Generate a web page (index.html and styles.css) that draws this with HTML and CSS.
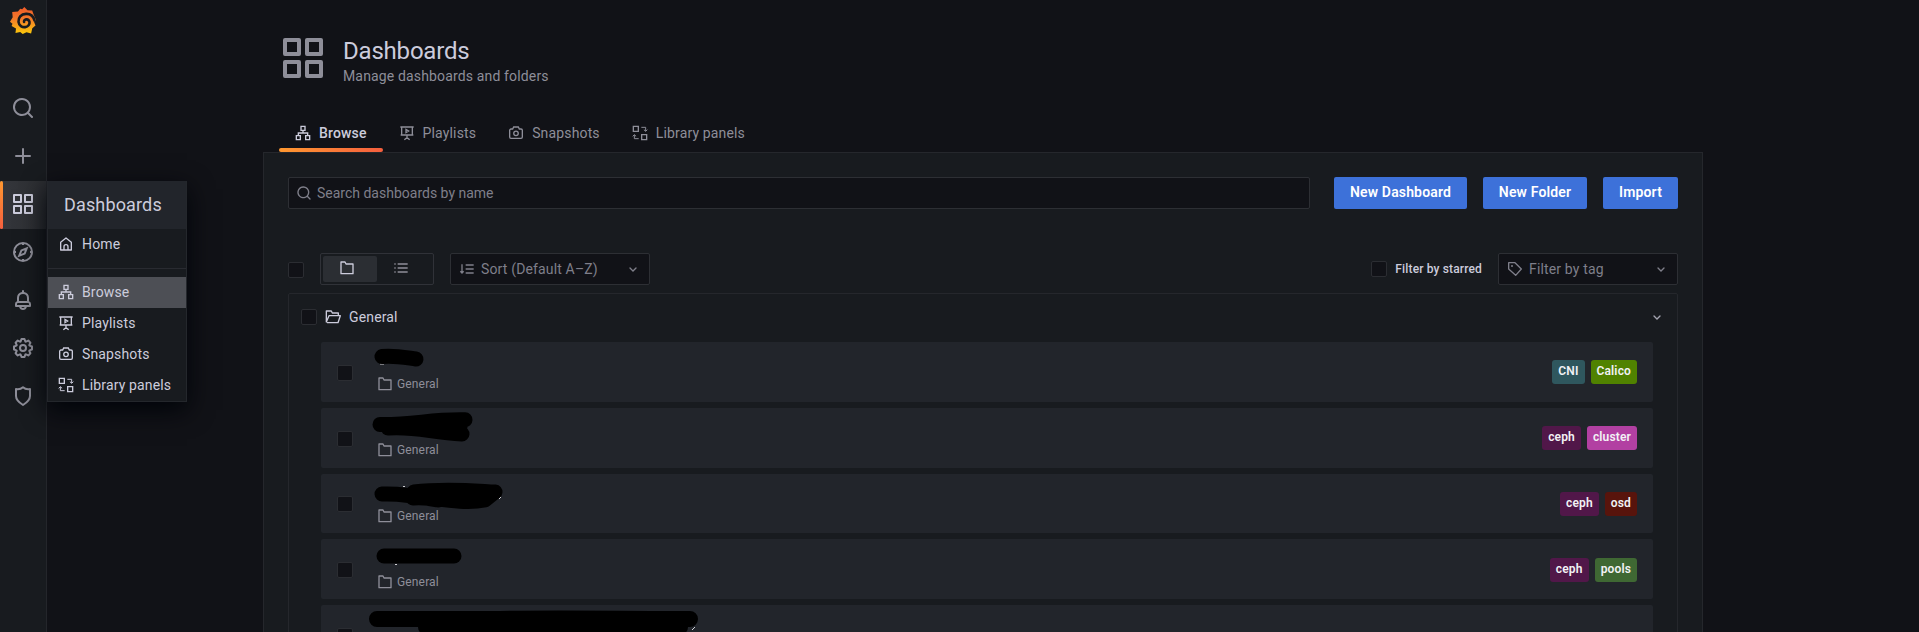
FILE: index.html
```html
<!DOCTYPE html>
<html lang="en">
<head>
<meta charset="utf-8">
<title>Dashboards</title>
<link rel="stylesheet" href="styles.css">
</head>
<body>
<svg class="defs" width="0" height="0">
  <defs>
    <linearGradient id="flame" x1="0" y1="0" x2="0" y2="1"><stop offset="0" stop-color="#f05a28"/><stop offset=".45" stop-color="#f47b2a"/><stop offset="1" stop-color="#fbca0a"/></linearGradient>
  </defs>
  <symbol id="search" viewBox="0 0 24 24"><path d="M21.71,20.29,18,16.61A9,9,0,1,0,16.61,18l3.68,3.68a1,1,0,0,0,1.42,0A1,1,0,0,0,21.71,20.29ZM11,18a7,7,0,1,1,7-7A7,7,0,0,1,11,18Z"/></symbol>
  <symbol id="plus" viewBox="0 0 24 24"><path d="M19,11H13V5a1,1,0,0,0-2,0v6H5a1,1,0,0,0,0,2h6v6a1,1,0,0,0,2,0V13h6a1,1,0,0,0,0-2Z"/></symbol>
  <symbol id="apps" viewBox="0 0 24 24"><g class="line" stroke-linejoin="round"><rect x="3" y="3" width="7" height="7"/><rect x="14" y="3" width="7" height="7"/><rect x="3" y="14" width="7" height="7"/><rect x="14" y="14" width="7" height="7"/></g></symbol>
  <symbol id="compass" viewBox="0 0 24 24"><g class="line"><circle cx="12" cy="12" r="9"/><path d="M12 3v2M12 19v2M3 12h2M19 12h2M15.8 8.2l-2.1 5.4-5.5 2.2 2.2-5.4z"/></g></symbol>
  <symbol id="bell" viewBox="0 0 24 24"><path d="M18,13.18V10a6,6,0,0,0-5-5.91V3a1,1,0,0,0-2,0V4.09A6,6,0,0,0,6,10v3.18A3,3,0,0,0,4,16v2a1,1,0,0,0,1,1H8.14a4,4,0,0,0,7.72,0H19a1,1,0,0,0,1-1V16A3,3,0,0,0,18,13.18ZM8,10a4,4,0,0,1,8,0v3H8Zm4,10a2,2,0,0,1-1.72-1h3.44A2,2,0,0,1,12,20Zm6-3H6V16a1,1,0,0,1,1-1H17a1,1,0,0,1,1,1Z"/></symbol>
  <symbol id="cog" viewBox="0 0 24 24"><path d="M21.32,9.55l-1.89-.63.89-1.78A1,1,0,0,0,20.13,6L18,3.87a1,1,0,0,0-1.15-.19l-1.78.89-.63-1.89A1,1,0,0,0,13.5,2h-3a1,1,0,0,0-.95.68L8.92,4.57,7.14,3.68A1,1,0,0,0,6,3.87L3.87,6a1,1,0,0,0-.19,1.15l.89,1.78-1.89.63A1,1,0,0,0,2,10.5v3a1,1,0,0,0,.68.95l1.89.63-.89,1.78A1,1,0,0,0,3.87,18L6,20.13a1,1,0,0,0,1.15.19l1.78-.89.63,1.89a1,1,0,0,0,.95.68h3a1,1,0,0,0,.95-.68l.63-1.89,1.78.89A1,1,0,0,0,18,20.13L20.13,18a1,1,0,0,0,.19-1.15l-.89-1.78,1.89-.63A1,1,0,0,0,22,13.5v-3A1,1,0,0,0,21.32,9.55ZM20,12.78l-1.2.4A2,2,0,0,0,17.64,16l.57,1.14-1.1,1.1L16,17.64a2,2,0,0,0-2.79,1.16l-.4,1.2H11.22l-.4-1.2A2,2,0,0,0,8,17.64l-1.14.57-1.1-1.1L6.36,16A2,2,0,0,0,5.2,13.18L4,12.78V11.22l1.2-.4A2,2,0,0,0,6.36,8L5.79,6.89l1.1-1.1L8,6.36A2,2,0,0,0,10.82,5.2l.4-1.2h1.56l.4,1.2A2,2,0,0,0,16,6.36l1.14-.57,1.1,1.1L17.64,8a2,2,0,0,0,1.16,2.79l1.2.4ZM12,8a4,4,0,1,0,4,4A4,4,0,0,0,12,8Zm0,6a2,2,0,1,1,2-2A2,2,0,0,1,12,14Z"/></symbol>
  <symbol id="shield" viewBox="0 0 24 24"><path class="line" stroke-linejoin="round" d="M12 3.200C10 5 7.500 5.500 5 5v7c0 4 3 6.500 7 9 4-2.500 7-5 7-9V5c-2.500.5-5 0-7-1.800z"/></symbol>
  <symbol id="home" viewBox="0 0 24 24"><path class="line" stroke-linejoin="round" d="M4 9.500 12 3l8 6.500V21H4zM9 21v-5a3 3 0 0 1 6 0v5"/></symbol>
  <symbol id="sitemap" viewBox="0 0 24 24"><path class="line" d="M9 2h6v6H9zM2 16h6v6H2zM16 16h6v6h-6zM12 8v4M5 16v-4h14v4"/></symbol>
  <symbol id="playlist" viewBox="0 0 24 24"><path class="line" d="M2 3h20M4 3v12h16V3M12 15v6M2.500 15h19M8 22l4-3 4 3M10.500 6.500v5l4-2.500z"/></symbol>
  <symbol id="camera" viewBox="0 0 24 24"><g class="line"><path d="M2.500 8a2 2 0 0 1 2-2H7l1.500-3h7L17 6h2.500a2 2 0 0 1 2 2v10a2 2 0 0 1-2 2h-15a2 2 0 0 1-2-2z"/><circle cx="12" cy="12.500" r="3.400"/></g></symbol>
  <symbol id="library" viewBox="0 0 24 24"><path class="line" d="M2 2h7.500v7.500H2zM14.500 14.500H22V22h-7.500z"/><path class="thin" d="M14 3.500h6.500V9M17.800 7l2.700 2.500L23 7M10 20.500H3.500V15M1 17l2.500-2.500L6.200 17"/></symbol>
  <symbol id="folder" viewBox="0 0 24 24"><path class="line" d="M3 3h6l1.500 3H21v14.500H3z" stroke-linejoin="round"/></symbol>
  <symbol id="folder-open" viewBox="0 0 24 24"><path class="line" d="M20 10V6h-9L9.500 3H2v16.500L6 10h17l-3.500 10.500H3" stroke-linejoin="round"/></symbol>
  <symbol id="list" viewBox="0 0 24 24"><path class="line" d="M7 6h15M7 12h15M7 18h15M2 6h2M2 12h2M2 18h2"/></symbol>
  <symbol id="sort" viewBox="0 0 24 24"><path class="line" d="M10 6h12M10 12h12M10 18h12M4.500 5v13M2 15.500 4.500 18 7 15.500"/></symbol>
  <symbol id="tag" viewBox="0 0 24 24"><path class="line" d="M2.500 2.500H12l9.500 9.500-8.500 9.500L2.500 12z" stroke-linejoin="round"/><circle cx="7.500" cy="7.500" r="1.500"/></symbol>
  <symbol id="angle" viewBox="0 0 24 24"><path class="line" d="M7.500 10.500l4.500 4.500 4.500-4.500" stroke-linecap="round"/></symbol>
</svg>

<div class="app">
  <nav class="sidebar">
    <a class="logo"><svg width="26" height="27" viewBox="0 0 26 27"><path fill="url(#flame)" d="M14.300 0l3.200 3.300 4.700.1 1.300 3.800 2.500 6-2 1.600 1.500 3.700-3.200 2.800-1.200 5.200-4.600-1.300-3.800 1.700-2.500-2-4.700 1.100L6 21.500 1.600 19 2.500 16.800 0 14.700l2.700-4.500L2.200 4.900l5.800-.5L10.200 1.800l2 .4z"/><path class="swirl" d="M24.500 13.500C23.300 8.500 19.500 6.700 16 6.900c-5 .2-8 4-7.500 8 .5 3.800 3.700 5.600 6.700 5.200 3-.4 4.700-2.800 4.300-5-.4-2-2-3-3.700-2.700-1.400.3-2 1.400-1.700 2.500"/></svg></a>
    <a class="nav-item"><svg class="i24"><use href="#search"/></svg></a>
    <a class="nav-item"><svg class="i24"><use href="#plus"/></svg></a>
    <a class="nav-item active"><svg class="i24"><use href="#apps"/></svg>
      <div class="flyout">
        <div class="flyout-title">Dashboards</div>
        <div class="flyout-item"><svg class="i16"><use href="#home"/></svg>Home</div>
        <div class="divider"></div>
        <div class="flyout-item current"><svg class="i16"><use href="#sitemap"/></svg>Browse</div>
        <div class="flyout-item"><svg class="i16"><use href="#playlist"/></svg>Playlists</div>
        <div class="flyout-item"><svg class="i16"><use href="#camera"/></svg>Snapshots</div>
        <div class="flyout-item"><svg class="i16"><use href="#library"/></svg>Library panels</div>
      </div>
    </a>
    <a class="nav-item"><svg class="i24"><use href="#compass"/></svg></a>
    <a class="nav-item"><svg class="i24"><use href="#bell"/></svg></a>
    <a class="nav-item"><svg class="i24"><use href="#cog"/></svg></a>
    <a class="nav-item"><svg class="i24"><use href="#shield"/></svg></a>
  </nav>

  <main class="page">
    <header class="page-header">
      <svg class="i48"><use href="#apps"/></svg>
      <div>
        <h1>Dashboards</h1>
        <p>Manage dashboards and folders</p>
      </div>
    </header>
    <div class="tabs">
      <a class="tab selected"><svg class="i16"><use href="#sitemap"/></svg>Browse</a>
      <a class="tab"><svg class="i16"><use href="#playlist"/></svg>Playlists</a>
      <a class="tab"><svg class="i16"><use href="#camera"/></svg>Snapshots</a>
      <a class="tab"><svg class="i16"><use href="#library"/></svg>Library panels</a>
    </div>
    <section class="panel">
      <div class="actions">
        <div class="search"><svg class="i16"><use href="#search"/></svg>Search dashboards by name</div>
        <button class="w-dash">New Dashboard</button>
        <button class="w-folder">New Folder</button>
        <button class="w-import">Import</button>
      </div>
      <div class="filters">
        <span class="check"></span>
        <div class="layout-toggle"><span class="on"><svg class="i16"><use href="#folder"/></svg></span><span><svg class="i16"><use href="#list"/></svg></span></div>
        <div class="select sort"><svg class="i16"><use href="#sort"/></svg><span>Sort (Default A–Z)</span><svg class="i16"><use href="#angle"/></svg></div>
        <label class="starred"><span class="check"></span>Filter by starred</label>
        <div class="select tags"><svg class="i16"><use href="#tag"/></svg><span>Filter by tag</span><svg class="i16"><use href="#angle"/></svg></div>
      </div>
      <div class="folder">
        <div class="folder-head"><span class="check"></span><svg class="i16"><use href="#folder-open"/></svg><span class="name">General</span><svg class="i16 caret"><use href="#angle"/></svg></div>
        <div class="rows">
          <div class="row"><span class="check"></span>
            <div class="info"><svg class="scribble" viewBox="0 0 340 32"><path class="speck" d="M10 22h4"/><path stroke-width="15" d="M12 14.500C24 13 38 16 46 17"/></svg><div class="loc"><svg class="i16"><use href="#folder"/></svg>General</div></div>
            <span class="label cni">CNI</span><span class="label calico">Calico</span></div>
          <div class="row"><span class="check"></span>
            <div class="info"><svg class="scribble" viewBox="0 0 340 32"><path stroke-width="15" d="M10 16.500C45 17 60 11 95 11.800M18 20C45 18 60 24 92 26M35 19L90 14M60 19h30"/></svg><div class="loc"><svg class="i16"><use href="#folder"/></svg>General</div></div>
            <span class="label ceph">ceph</span><span class="label cluster">cluster</span></div>
          <div class="row"><span class="check"></span>
            <div class="info"><svg class="scribble" viewBox="0 0 340 32"><path stroke-width="15" d="M12 20c20-1 40 3 56 6M44 18C75 14 105 17 125 18M43 24C65 22 90 31 115 26L125 18M60 22h60"/><path class="speck" d="M33 12.500h2M129 25l2-2"/></svg><div class="loc"><svg class="i16"><use href="#folder"/></svg>General</div></div>
            <span class="label ceph">ceph</span><span class="label osd">osd</span></div>
          <div class="row"><span class="check"></span>
            <div class="info"><svg class="scribble" viewBox="0 0 340 32"><path stroke-width="15" d="M14 16H84"/><path class="speck" d="M25 24.500h2"/></svg><div class="loc"><svg class="i16"><use href="#folder"/></svg>General</div></div>
            <span class="label ceph">ceph</span><span class="label pools">pools</span></div>
          <div class="row"><span class="check"></span>
            <div class="info"><svg class="scribble" viewBox="0 0 340 32"><path stroke-width="16" d="M7 14H130C180 13 250 14 320 14M56 22H310"/><path class="speck" d="M322 25l3-3"/></svg></div></div>
        </div>
      </div>
    </section>
  </main>
</div>
</body>
</html>
```
FILE: styles.css
```css
* { box-sizing: border-box; }
body { margin: 0; background: #111217; color: #ccccdc; font: 14px/22px Roboto, sans-serif; letter-spacing: 0.15px; }
.defs { position: absolute; }
svg { display: block; flex: none; fill: currentColor; overflow: visible; }
.line { fill: none; stroke: currentColor; stroke-width: 2; }
.thin { fill: none; stroke: currentColor; stroke-width: 1.5; }
.i16 { width: 16px; height: 16px; }
.i24 { width: 24px; height: 24px; }
.i48 { width: 48px; height: 48px; }
.app { display: flex; height: 632px; overflow: hidden; }

.sidebar { width: 47px; flex: none; background: #181b1f; border-right: 1px solid #24262b; color: #8e8e99; }
.logo { display: block; height: 85px; padding: 7px 0 0 10px; }
.swirl { fill: none; stroke: #181b1f; stroke-width: 2.6; stroke-linecap: round; }
.nav-item { position: relative; display: flex; height: 48px; padding: 11px 0 0 11px; }
.nav-item.active { color: #ccccdc; background: linear-gradient(90deg, #35373c, #2b2d31); }
.nav-item.active::before { content: ""; position: absolute; left: 0; top: 0; width: 3px; height: 48px; border-radius: 2px; background: linear-gradient(#ff9830, #f55f3e); }
.flyout { position: absolute; z-index: 2; left: 47px; top: 0; width: 140px; height: 221px; background: #181b1f; border: 1px solid #24272c; border-top: 0; box-shadow: 0 8px 24px #010409; }
.flyout-title { height: 48px; padding-left: 16px; background: #22252b; font-size: 18px; line-height: 47px; letter-spacing: 0.15px; }
.flyout-item { display: flex; align-items: center; gap: 8px; height: 31px; padding: 0 10px 2px; white-space: nowrap; }
.flyout-item.current { background: #4d4f55; }
.divider { height: 1px; margin: 8px 0; background: #292b31; }

.page { width: 1440px; margin-left: 216px; display: flex; flex-direction: column; }
.page-header { display: flex; height: 112px; padding: 34px 16px 0; gap: 16px; color: #8e8e99; }
.page-header h1 { margin: 2px 0 0; font-size: 24px; line-height: 30px; font-weight: 400; letter-spacing: -0.2px; color: #ccccdc; }
.page-header p { margin: 0; line-height: 20px; }
.tabs { display: flex; height: 40px; padding-left: 16px; color: #8e8e99; }
.tab { position: relative; display: flex; align-items: center; gap: 8px; height: 40px; padding: 2px 16px 0; }
.tab.selected { color: #ccccdc; font-weight: 500; }
.tab.selected::after { content: ""; position: absolute; left: 0; right: 0; bottom: 0; height: 4px; border-radius: 2px; background: linear-gradient(90deg, #ff9830, #f55f3e); }
.panel { height: 480px; padding: 24px; background: #181b1f; border: 1px solid #25272c; border-bottom: 0; }
.actions { display: flex; height: 32px; }
.search { display: flex; flex: 1; align-items: center; gap: 5px; margin-right: 24px; padding-left: 7px; background: #111217; border: 1px solid #2d2f34; border-radius: 2px; color: #7f7f8a; letter-spacing: 0; }
button { height: 32px; margin: 0 0 0 16px; padding: 0 0 2px; border: 0; border-radius: 2px; background: #3d71d9; color: #fff; font: 600 14px/30px Roboto, sans-serif; letter-spacing: 0.15px; }
.w-dash { width: 133px; margin-left: 0; }
.w-folder { width: 104px; }
.w-import { width: 75px; }
.filters { display: flex; height: 32px; margin: 44px 0 8px; align-items: center; }
.check { width: 16px; height: 16px; flex: none; background: #111217; border: 1px solid #2b2d32; border-radius: 2px; }
.filters > .check { margin-top: 2px; }
.layout-toggle { display: flex; width: 114px; height: 32px; margin: 0 16px; padding: 2px; border: 1px solid #303238; border-radius: 2px; color: #8e8e99; }
.layout-toggle span { width: 54px; padding: 4px 0 0 16px; border-radius: 2px; }
.layout-toggle .on { background: #2b2e33; color: #ccccdc; }
.select { display: flex; align-items: center; gap: 6px; height: 32px; padding: 0 8px; background: #111217; border: 1px solid #2d2f34; border-radius: 2px; color: #7f7f8a; }
.select span { flex: 1; }
.sort { width: 200px; }
.tags { width: 180px; }
.starred { display: flex; align-items: center; gap: 8px; margin: 0 16px 0 auto; font-size: 12px; font-weight: 500; }
.starred .check { margin-bottom: 1px; }
.folder { height: 400px; border: 1px solid #25272c; border-radius: 2px; }
.folder-head { display: flex; align-items: center; height: 48px; padding: 0 0 2px 12px; }
.folder-head svg { margin-left: 8px; }
.name { margin-left: 8px; }
.folder-head .caret { margin: 0 12px 0 auto; color: #a4a4b0; }
.rows { display: flex; flex-direction: column; gap: 6px; padding: 0 24px 0 32px; }
.row { display: flex; align-items: center; height: 59.75px; flex: none; padding: 0 16px; background: #22252b; border-radius: 2px; }
.row .check { margin-top: 2px; }
.info { flex: 1; height: 59px; padding: 0 0 0 16px; }
.scribble { width: 340px; height: 32px; margin-left: 1px; fill: none; stroke: #000; stroke-linecap: round; stroke-linejoin: round; }
.speck { stroke: #d0d0d4; stroke-width: 1; stroke-linecap: butt; }
.loc { display: flex; align-items: center; gap: 4px; padding-left: 8px; font-size: 12px; line-height: 20px; color: #8e8e99; }
.label { height: 24px; margin: 1px 0 0 6px; padding: 0 6px; border-radius: 3px; color: #f2f2f5; font-size: 12px; line-height: 23px; font-weight: 600; letter-spacing: 0.15px; }
.cni { background: #2f575e; }
.calico { background: #508200; }
.ceph { background: #511749; }
.cluster { background: #b240a2; }
.osd { background: #58140c; }
.pools { background: #3f6833; }
```
